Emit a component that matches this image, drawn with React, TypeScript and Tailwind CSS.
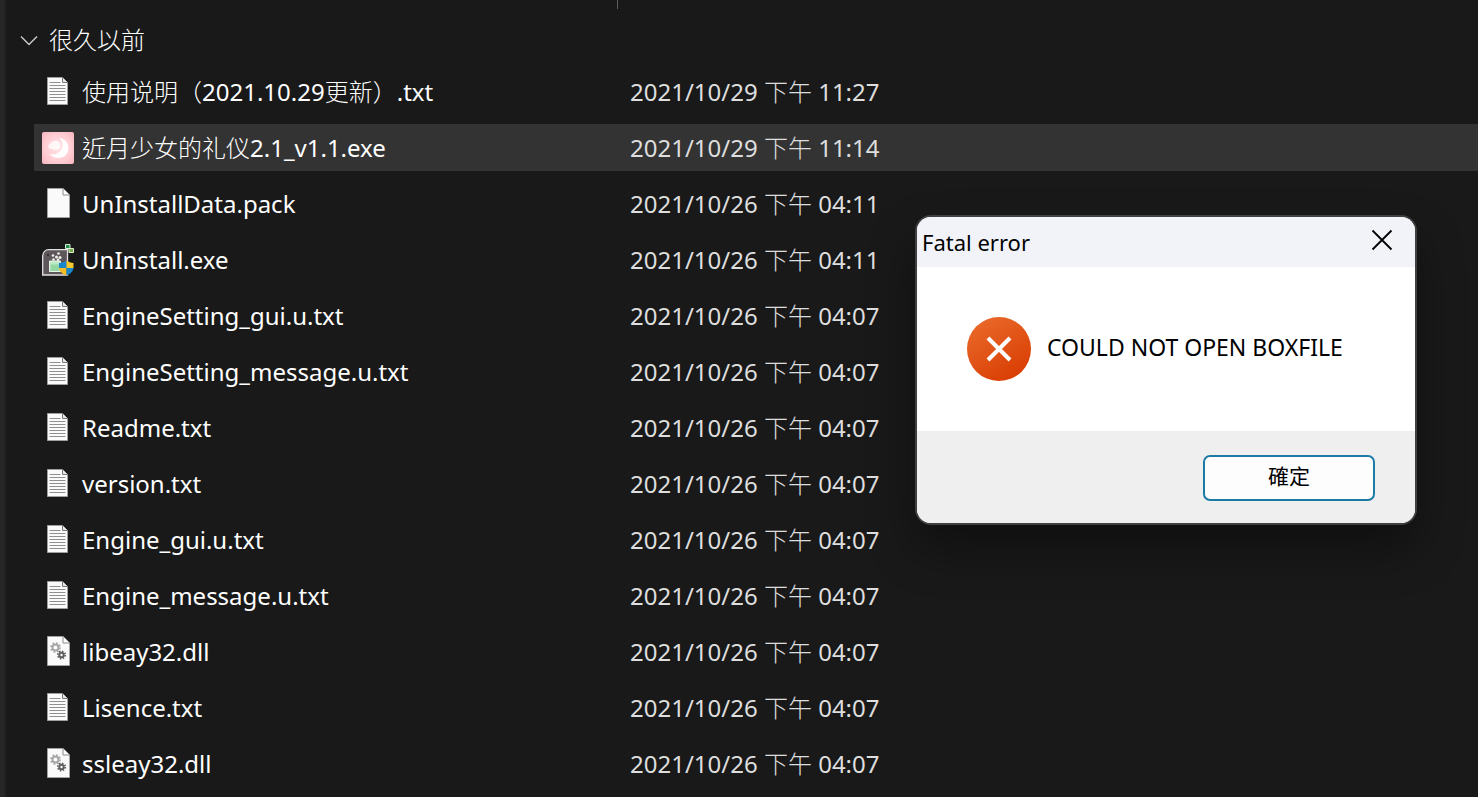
import React from 'react';

type IconKind = 'text' | 'blank' | 'dll' | 'moon' | 'uninstall';

interface FileRow {
  name: string;
  date: string;
  icon: IconKind;
  selected?: boolean;
}

const files: FileRow[] = [
  { name: '使用说明（2021.10.29更新）.txt', date: '2021/10/29 下午 11:27', icon: 'text' },
  { name: '近月少女的礼仪2.1_v1.1.exe', date: '2021/10/29 下午 11:14', icon: 'moon', selected: true },
  { name: 'UnInstallData.pack', date: '2021/10/26 下午 04:11', icon: 'blank' },
  { name: 'UnInstall.exe', date: '2021/10/26 下午 04:11', icon: 'uninstall' },
  { name: 'EngineSetting_gui.u.txt', date: '2021/10/26 下午 04:07', icon: 'text' },
  { name: 'EngineSetting_message.u.txt', date: '2021/10/26 下午 04:07', icon: 'text' },
  { name: 'Readme.txt', date: '2021/10/26 下午 04:07', icon: 'text' },
  { name: 'version.txt', date: '2021/10/26 下午 04:07', icon: 'text' },
  { name: 'Engine_gui.u.txt', date: '2021/10/26 下午 04:07', icon: 'text' },
  { name: 'Engine_message.u.txt', date: '2021/10/26 下午 04:07', icon: 'text' },
  { name: 'libeay32.dll', date: '2021/10/26 下午 04:07', icon: 'dll' },
  { name: 'Lisence.txt', date: '2021/10/26 下午 04:07', icon: 'text' },
  { name: 'ssleay32.dll', date: '2021/10/26 下午 04:07', icon: 'dll' },
];

// Chinese runs are set in the light weight, everything else stays regular
const MixedText: React.FC<{ text: string }> = ({ text }) => (
  <>
    {text.split(/([\u4e00-\u9fff\uff08\uff09]+)/).map((part, i) =>
      i % 2 === 1 ? <span key={i} className="font-light">{part}</span> : part
    )}
  </>
);

const Gear: React.FC<{ cx: number; cy: number; r: number; color: string }> = ({ cx, cy, r, color }) => (
  <g stroke={color} fill="none">
    <circle cx={cx} cy={cy} r={r} strokeWidth="2" />
    <circle cx={cx} cy={cy} r={r + 1.6} strokeWidth="1.6" strokeDasharray={`${(r + 1.6) * 0.39} ${(r + 1.6) * 0.395}`} />
  </g>
);

const FileIcon: React.FC<{ kind: IconKind }> = ({ kind }) => {
  if (kind === 'text') {
    return (
      <svg viewBox="0 0 32 32" className="w-8 h-8 shrink-0">
        <path d="M5.5 1.500h15l5 5v22h-20z" fill="#fafafa" stroke="#a0a0a0" />
        <path d="M20.5 1.500v5h5" fill="#e8e8e8" stroke="#777" />
        <path d="M7.500 6.500h11M7.500 9.500h16M7.500 12.500h16M7.500 15.500h16M7.500 18.500h16M7.500 21.500h16M7.500 24.500h16" stroke="#8f8f8f" />
      </svg>
    );
  }
  if (kind === 'moon') {
    return (
      <svg viewBox="0 0 32 32" className="w-8 h-8 shrink-0">
        <defs>
          <radialGradient id="pink" cx="50%" cy="50%" r="70%">
            <stop offset="0" stopColor="#ffe2e4" />
            <stop offset="0.6" stopColor="#ffcdd3" />
            <stop offset="1" stopColor="#f9b4bf" />
          </radialGradient>
        </defs>
        <rect width="32" height="32" rx="2" fill="url(#pink)" />
        <path d="M17 6c6 .5 9.500 5 9.500 10 0 6-4.500 10-10 10-4 0-7-1.500-9-4 3 .8 6.500.5 9-1.500 3-2.300 4-4.500 4-7.500 0-3-1.500-5.500-3.500-7z" fill="#fffdfd" />
        <path d="M6 14.500c1.500-3 4-5.500 7.500-6 3-.3 5 1.500 5.200 4 .2 2.500-1.200 5-4.200 5.300-2 .2-3-.8-5-.8-1.500 0-2.500-.5-3.500-2.500z" fill="#fff" fillOpacity="0.75" />
      </svg>
    );
  }
  if (kind === 'uninstall') {
    return (
      <svg viewBox="0 0 32 32" className="w-8 h-8 shrink-0">
        <path d="M.7 31V12.500C.7 8.500 3 5.700 7 5.700h18.500V31z" fill="#5d565b" stroke="#e3e1e2" strokeWidth="1.300" />
        <path d="M7.500 17h11v10.500h-11z" fill="#bfe8c6" stroke="#e6f5e8" />
        <path d="M8.500 20.500h9V27h-9z" fill="#93d7a3" />
        <g fill="#f1f1ec">
          <circle cx="11" cy="11.500" r="1.300" />
          <circle cx="16.500" cy="9.500" r="1.300" />
          <circle cx="14.500" cy="13" r="1.500" />
          <circle cx="18" cy="13.500" r="1.500" />
          <circle cx="11.500" cy="15.500" r="1.300" />
          <circle cx="16" cy="15.800" r="1.300" />
        </g>
        <circle cx="6" cy="11" r="1" fill="#2c282a" />
        <path d="M23.500.5h4.500v4h-4.500z" fill="#238e4c" stroke="#d4efd8" />
        <path d="M27 4.500h4.500v4H27z" fill="#6fa744" stroke="#e0efd2" />
        <path d="M24.500 16.500c-2 1.800-4.500 2.300-7.500 2.500v5h7.500z" fill="#1b87cb" />
        <path d="M24.500 16.500c2 1.800 4.500 2.300 7 2.500v5h-7z" fill="#f8c72e" />
        <path d="M17 24c.3 3.500 3.500 6 7.500 7.500V24z" fill="#f5bd24" />
        <path d="M31.500 24c-.3 3.500-3.500 6-7 7.500V24z" fill="#1b87cb" />
      </svg>
    );
  }
  return (
    <svg viewBox="0 0 32 32" className="w-8 h-8 shrink-0">
      <path d="M5.500.5h15.500l6.500 6.500v22.500h-22z" fill="#fafafa" stroke="#a3a3a3" />
      <path d="M21 .5V7h6.500" fill="#fff" stroke="#8a8a8a" />
      {kind === 'dll' && (
        <>
          <Gear cx={13.500} cy={11.500} r={3} color="#a6a6a6" />
          <Gear cx={19.500} cy={19} r={2.200} color="#5f5f5f" />
        </>
      )}
    </svg>
  );
};

const FileTable: React.FC = () => (
  <table className="w-full table-fixed border-separate border-spacing-x-0 border-spacing-y-[9px] text-left">
    <tbody>
      {files.map((file) => (
        <tr key={file.name} className={file.selected ? 'h-[47px] bg-[#333333]' : 'h-[47px]'}>
          <td className="w-[588px] p-0 pl-2">
            <div className="flex items-center gap-2 whitespace-nowrap">
              <FileIcon kind={file.icon} />
              <span className="text-white"><MixedText text={file.name} /></span>
            </div>
          </td>
          <td className="p-0 pl-2 whitespace-nowrap text-[#dedede]"><MixedText text={file.date} /></td>
        </tr>
      ))}
    </tbody>
  </table>
);

const ErrorDialog: React.FC = () => (
  <div
    role="alertdialog"
    aria-labelledby="dialog-title"
    aria-describedby="dialog-message"
    className="absolute top-[217px] right-[63px] w-[498px] overflow-hidden rounded-[14px] bg-white text-black shadow-[0_0_0_2px_#404040,0_24px_48px_rgba(0,0,0,0.4)]"
  >
    <div className="flex h-[50px] items-center justify-between bg-[#f1f3f9] pl-[5px] pr-[19px]">
      <h2 id="dialog-title" className="text-[22px]">Fatal error</h2>
      <button aria-label="Close" className="flex h-8 w-7 items-start justify-center">
        <svg viewBox="0 0 28 28" className="h-7 w-7" fill="none" stroke="currentColor" strokeWidth="1.800">
          <path d="M4.500 4.500l19 19M23.500 4.500l-19 19" />
        </svg>
      </button>
    </div>
    <div className="flex h-[164px] items-center gap-4 px-[50px]">
      <svg viewBox="0 0 64 64" className="h-16 w-16 shrink-0">
        <defs>
          <linearGradient id="error" x1="0.2" y1="0" x2="0.8" y2="1">
            <stop offset="0" stopColor="#ea6a2b" />
            <stop offset="1" stopColor="#d83b01" />
          </linearGradient>
        </defs>
        <circle cx="32" cy="32" r="32" fill="url(#error)" />
        <path d="M21 21l22 22M43 21L21 43" stroke="#fff" strokeWidth="4" />
      </svg>
      <p id="dialog-message" className="pb-1 text-[23px] whitespace-nowrap">COULD NOT OPEN BOXFILE</p>
    </div>
    <div className="flex h-[92px] justify-end bg-[#efefef] px-10 pt-6">
      <button className="h-[46px] w-[172px] rounded-[7px] border-2 border-[#1c7aa5] bg-[#fdfdfd] pb-1 text-[21px] leading-none">
        確定
      </button>
    </div>
  </div>
);

export default function App() {
  return (
    <div
      lang="zh-Hant"
      className="relative flex min-h-screen bg-[#191919] font-['Noto_Sans','Noto_Sans_CJK_TC',sans-serif] text-[24px] leading-8"
    >
      <div className="w-[6px] shrink-0 border-r-2 border-[#222222] bg-[#272727]" />
      <main className="min-w-0 flex-1 pl-7">
        <div className="h-[9px] w-[584px] border-r border-[#5c5c5c]" />
        <h1 className="-ml-4 flex h-[50px] items-center gap-2 pt-3 font-light text-white">
          <svg viewBox="0 0 24 24" className="-ml-px h-6 w-6" fill="none" stroke="#c8c8c8" strokeWidth="1.500">
            <path d="M4 8.500l8 8 8-8" />
          </svg>
          很久以前
        </h1>
        <FileTable />
      </main>
      <ErrorDialog />
    </div>
  );
}
